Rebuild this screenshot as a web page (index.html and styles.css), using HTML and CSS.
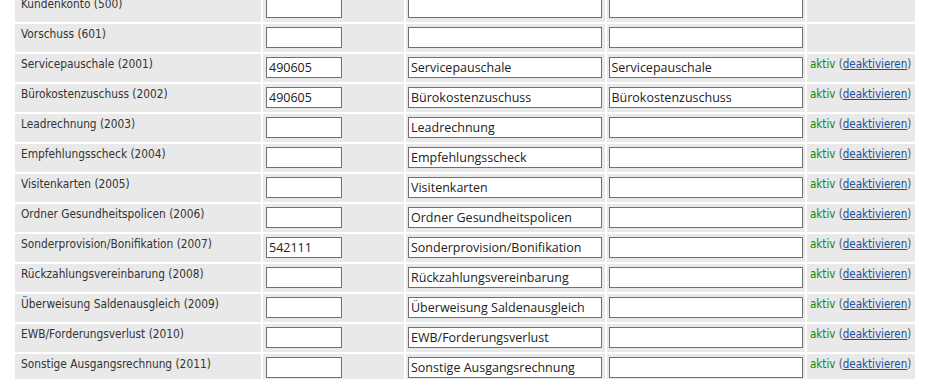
FILE: index.html
```html
<!DOCTYPE html>
<html lang="de">
<head>
    <meta charset="UTF-8">
    <title>Konten</title>
    <link rel="stylesheet" href="styles.css">
</head>
<body>
    <div class="content">
        <table class="accounts">
            <tr>
                <td class="label">Kundenkonto (500)</td>
                <td class="num"><input type="text" class="short" value=""></td>
                <td><input type="text" class="long" value=""></td>
                <td><input type="text" class="long" value=""></td>
                <td class="status"></td>
            </tr>
            <tr>
                <td class="label">Vorschuss (601)</td>
                <td class="num"><input type="text" class="short" value=""></td>
                <td><input type="text" class="long" value=""></td>
                <td><input type="text" class="long" value=""></td>
                <td class="status"></td>
            </tr>
            <tr>
                <td class="label">Servicepauschale (2001)</td>
                <td class="num"><input type="text" class="short" value="490605"></td>
                <td><input type="text" class="long" value="Servicepauschale"></td>
                <td><input type="text" class="long" value="Servicepauschale"></td>
                <td class="status"><span class="active">aktiv</span> (<a href="#">deaktivieren</a>)</td>
            </tr>
            <tr>
                <td class="label">Bürokostenzuschuss (2002)</td>
                <td class="num"><input type="text" class="short" value="490605"></td>
                <td><input type="text" class="long" value="Bürokostenzuschuss"></td>
                <td><input type="text" class="long" value="Bürokostenzuschuss"></td>
                <td class="status"><span class="active">aktiv</span> (<a href="#">deaktivieren</a>)</td>
            </tr>
            <tr>
                <td class="label">Leadrechnung (2003)</td>
                <td class="num"><input type="text" class="short" value=""></td>
                <td><input type="text" class="long" value="Leadrechnung"></td>
                <td><input type="text" class="long" value=""></td>
                <td class="status"><span class="active">aktiv</span> (<a href="#">deaktivieren</a>)</td>
            </tr>
            <tr>
                <td class="label">Empfehlungsscheck (2004)</td>
                <td class="num"><input type="text" class="short" value=""></td>
                <td><input type="text" class="long" value="Empfehlungsscheck"></td>
                <td><input type="text" class="long" value=""></td>
                <td class="status"><span class="active">aktiv</span> (<a href="#">deaktivieren</a>)</td>
            </tr>
            <tr>
                <td class="label">Visitenkarten (2005)</td>
                <td class="num"><input type="text" class="short" value=""></td>
                <td><input type="text" class="long" value="Visitenkarten"></td>
                <td><input type="text" class="long" value=""></td>
                <td class="status"><span class="active">aktiv</span> (<a href="#">deaktivieren</a>)</td>
            </tr>
            <tr>
                <td class="label">Ordner Gesundheitspolicen (2006)</td>
                <td class="num"><input type="text" class="short" value=""></td>
                <td><input type="text" class="long" value="Ordner Gesundheitspolicen"></td>
                <td><input type="text" class="long" value=""></td>
                <td class="status"><span class="active">aktiv</span> (<a href="#">deaktivieren</a>)</td>
            </tr>
            <tr>
                <td class="label">Sonderprovision/Bonifikation (2007)</td>
                <td class="num"><input type="text" class="short" value="542111"></td>
                <td><input type="text" class="long" value="Sonderprovision/Bonifikation"></td>
                <td><input type="text" class="long" value=""></td>
                <td class="status"><span class="active">aktiv</span> (<a href="#">deaktivieren</a>)</td>
            </tr>
            <tr>
                <td class="label">Rückzahlungsvereinbarung (2008)</td>
                <td class="num"><input type="text" class="short" value=""></td>
                <td><input type="text" class="long" value="Rückzahlungsvereinbarung"></td>
                <td><input type="text" class="long" value=""></td>
                <td class="status"><span class="active">aktiv</span> (<a href="#">deaktivieren</a>)</td>
            </tr>
            <tr>
                <td class="label">Überweisung Saldenausgleich (2009)</td>
                <td class="num"><input type="text" class="short" value=""></td>
                <td><input type="text" class="long" value="Überweisung Saldenausgleich"></td>
                <td><input type="text" class="long" value=""></td>
                <td class="status"><span class="active">aktiv</span> (<a href="#">deaktivieren</a>)</td>
            </tr>
            <tr>
                <td class="label">EWB/Forderungsverlust (2010)</td>
                <td class="num"><input type="text" class="short" value=""></td>
                <td><input type="text" class="long" value="EWB/Forderungsverlust"></td>
                <td><input type="text" class="long" value=""></td>
                <td class="status"><span class="active">aktiv</span> (<a href="#">deaktivieren</a>)</td>
            </tr>
            <tr>
                <td class="label">Sonstige Ausgangsrechnung (2011)</td>
                <td class="num"><input type="text" class="short" value=""></td>
                <td><input type="text" class="long" value="Sonstige Ausgangsrechnung"></td>
                <td><input type="text" class="long" value=""></td>
                <td class="status"><span class="active">aktiv</span> (<a href="#">deaktivieren</a>)</td>
            </tr>
        </table>
    </div>
</body>
</html>
```

FILE: styles.css
```css
body {
    font-family: "DejaVu Sans Condensed", "DejaVu Sans", sans-serif;
    font-size: 11.8px;
    color: #333333;
    margin: 0;
    padding: 0;
    background-color: #ffffff;
}

.content {
    padding: 0 0 0 13px;
    margin-top: -8px;
}

.accounts {
    border-collapse: separate;
    border-spacing: 2px;
    width: 904px;
    table-layout: fixed;
}

.accounts td {
    background-color: #e9e9e9;
    height: 28px;
    padding: 0 0 0 2px;
    vertical-align: top;
    box-sizing: border-box;
}

.accounts td.label {
    width: 246px;
    padding: 3px 0 0 6px;
}

.accounts td.num {
    width: 141px;
    padding-left: 3px;
}

.accounts td.status {
    width: 108px;
    padding: 3px 0 0 3px;
    font-size: 11.5px;
    color: #555555;
}

.accounts input {
    font-family: "Open Sans", sans-serif;
    font-size: 12.5px;
    color: #222222;
    height: 21px;
    margin: 3px 0 0 0;
    padding: 0 2px;
    border: 1px solid #707070;
    box-sizing: border-box;
    background: #ffffff;
}

.accounts input.short {
    width: 76px;
}

.accounts input.long {
    width: 194px;
}

.active {
    color: #0e850e;
}

.status a {
    color: #1a4f9c;
    text-decoration: underline;
}
```
